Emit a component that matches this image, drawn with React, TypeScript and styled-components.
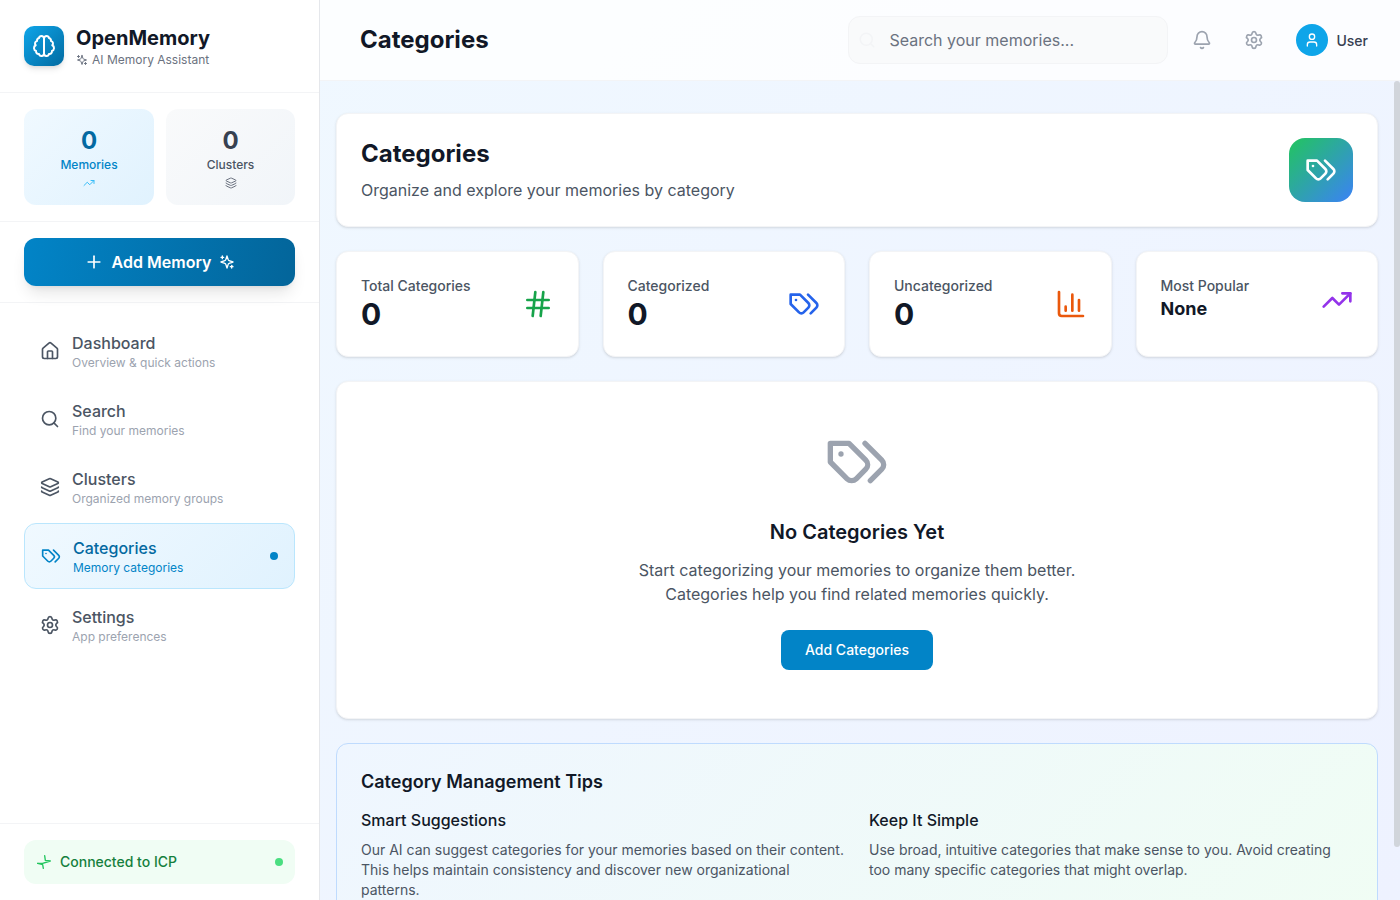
import React from "react";
import styled, { createGlobalStyle } from "styled-components";
import { Bell, ChartColumn, Hash, House, Layers, Plus, Search, Settings, TrendingUp, User } from "lucide-react";

const Global = createGlobalStyle`
  html, body { margin: 0; padding: 0; height: 100%; overflow: hidden; }
  #root { height: 100%; }
  * { box-sizing: border-box; }
  body { font-family: Inter, "Liberation Sans", sans-serif; color: #111827; }
`;

type GlyphProps = { size?: number; color?: string; strokeWidth?: number };

const Glyph = ({ size = 24, color = "currentColor", strokeWidth = 2, children }: GlyphProps & { children: React.ReactNode }) => (
  <svg width={size} height={size} viewBox="0 0 24 24" fill="none" stroke={color} strokeWidth={strokeWidth} strokeLinecap="round" strokeLinejoin="round">
    {children}
  </svg>
);

const Tags = (p: GlyphProps) => (
  <Glyph {...p}>
    <path d="M9 5H2v7l6.29 6.29c.94.94 2.48.94 3.42 0l3.58-3.58c.94-.94.94-2.48 0-3.42L9 5Z" />
    <path d="M6 9.01V9" />
    <path d="m15 5 6.3 6.3a2.4 2.4 0 0 1 0 3.4L17 19" />
  </Glyph>
);

const Brain = (p: GlyphProps) => (
  <Glyph {...p}>
    <path d="M9.5 2A2.5 2.5 0 0 1 12 4.5v15a2.5 2.5 0 0 1-4.96.44 2.5 2.5 0 0 1-2.96-3.08 3 3 0 0 1-.34-5.58 2.5 2.5 0 0 1 1.32-4.24 2.5 2.5 0 0 1 1.98-3A2.5 2.5 0 0 1 9.5 2Z" />
    <path d="M14.5 2A2.5 2.5 0 0 0 12 4.5v15a2.5 2.5 0 0 0 4.96.44 2.5 2.5 0 0 0 2.96-3.08 3 3 0 0 0 .34-5.58 2.5 2.5 0 0 0-1.32-4.24 2.5 2.5 0 0 0-1.98-3A2.5 2.5 0 0 0 14.5 2Z" />
  </Glyph>
);

const Sparkles = (p: GlyphProps) => (
  <Glyph {...p}>
    <path d="m12 3-1.912 5.813a2 2 0 0 1-1.275 1.275L3 12l5.813 1.912a2 2 0 0 1 1.275 1.275L12 21l1.912-5.813a2 2 0 0 1 1.275-1.275L21 12l-5.813-1.912a2 2 0 0 1-1.275-1.275L12 3Z" />
    <path d="M5 3v4" />
    <path d="M19 17v4" />
    <path d="M3 5h4" />
    <path d="M17 19h4" />
  </Glyph>
);

const Bolt = (p: GlyphProps) => (
  <Glyph {...p}>
    <path d="M13 2.5 14 9.5 21.5 10.5 10 14 2.5 14" />
    <path d="M2.5 14 10 16 11 21.5" />
  </Glyph>
);

const Shell = styled.div`
  display: flex;
  height: 100vh;
  background: linear-gradient(135deg, #f0f9ff 0%, #eef2ff 100%);
`;
const Sidebar = styled.aside`
  width: 320px;
  flex: none;
  display: flex;
  flex-direction: column;
  background: #fff;
  border-right: 1px solid #e5e7eb;
`;
const Brand = styled.div`
  height: 93px;
  padding: 0 24px;
  display: flex;
  align-items: center;
  gap: 12px;
  border-bottom: 1px solid #f3f4f6;
`;
const LogoMark = styled.div`
  width: 40px;
  height: 40px;
  border-radius: 10px;
  display: flex;
  align-items: center;
  justify-content: center;
  color: #fff;
  background: linear-gradient(135deg, #0ea5e9, #036ba1);
  box-shadow: 0 4px 6px -1px rgba(0,0,0,.1), 0 2px 4px -2px rgba(0,0,0,.1);
`;
const BrandName = styled.div`
  font-size: 20px;
  line-height: 28px;
  font-weight: 700;
  color: #111827;
`;
const BrandSub = styled.div`
  display: flex;
  align-items: center;
  gap: 4px;
  font-size: 12px;
  line-height: 16px;
  color: #6b7280;
`;
const Stats = styled.div`
  height: 129px;
  padding: 16px 24px;
  display: grid;
  grid-template-columns: 130px 129px;
  gap: 12px;
  border-bottom: 1px solid #f3f4f6;
`;
const StatBox = styled.div<{ $accent?: boolean }>`
  height: 96px;
  padding-top: 16px;
  border-radius: 12px;
  display: flex;
  flex-direction: column;
  align-items: center;
  background: ${p => p.$accent ? "linear-gradient(135deg, #f0f9ff, #e0f2fe)" : "linear-gradient(135deg, #f9fafb, #f1f5f9)"};
`;
const StatNum = styled.div<{ $accent?: boolean }>`
  font-size: 24px;
  line-height: 32px;
  font-weight: 700;
  color: ${p => p.$accent ? "#0369a1" : "#374151"};
`;
const StatLabel = styled.div<{ $accent?: boolean }>`
  font-size: 12px;
  line-height: 16px;
  font-weight: 500;
  color: ${p => p.$accent ? "#0284c7" : "#4b5563"};
  margin-bottom: 4px;
`;
const ActionWrap = styled.div`
  height: 81px;
  padding: 16px 24px;
  border-bottom: 1px solid #f3f4f6;
`;
const AddButton = styled.button`
  width: 100%;
  height: 48px;
  border: 0;
  border-radius: 12px;
  display: flex;
  align-items: center;
  justify-content: center;
  gap: 8px;
  color: #fff;
  font: 600 16px/24px Inter, sans-serif;
  background: linear-gradient(100deg, #0284c7, #03659a);
  box-shadow: 0 10px 15px -3px rgba(0,0,0,.1), 0 4px 6px -4px rgba(0,0,0,.1);
`;
const Nav = styled.nav`
  flex: 1;
  padding: 16px 24px;
  display: flex;
  flex-direction: column;
  gap: 4px;
`;
const NavItem = styled.div<{ $active?: boolean }>`
  height: ${p => p.$active ? "66px" : "64px"};
  padding: 0 16px;
  display: flex;
  align-items: center;
  gap: 12px;
  border-radius: 12px;
  color: ${p => p.$active ? "#0284c7" : "#4b5563"};
  ${p => p.$active ? `
    background: linear-gradient(135deg, #f0f9ff, #e0f2fe);
    border: 1px solid #bae6fd;
  ` : ""}
`;
const NavText = styled.div`
  flex: 1;
  min-width: 0;
`;
const NavTitle = styled.div<{ $active?: boolean }>`
  font-size: 16px;
  line-height: 24px;
  font-weight: 500;
  color: ${p => p.$active ? "#0369a1" : "#4b5563"};
`;
const NavSub = styled.div<{ $active?: boolean }>`
  font-size: 12px;
  line-height: 16px;
  color: ${p => p.$active ? "#0284c7" : "#9ca3af"};
`;
const ActiveDot = styled.span`
  width: 8px;
  height: 8px;
  border-radius: 50%;
  background: #0284c7;
`;
const SideFoot = styled.div`
  height: 77px;
  padding: 16px 24px;
  border-top: 1px solid #f3f4f6;
`;
const Connected = styled.div`
  height: 44px;
  padding: 0 12px;
  border-radius: 12px;
  background: #f0fdf4;
  display: flex;
  align-items: center;
  gap: 8px;
  color: #15803d;
  font-size: 14px;
  line-height: 20px;
  font-weight: 500;
`;
const ConnLabel = styled.span`
  flex: 1;
`;
const ConnDot = styled.span`
  width: 8px;
  height: 8px;
  border-radius: 50%;
  background: #4ade80;
`;
const Main = styled.div`
  flex: 1;
  min-width: 0;
  display: flex;
  flex-direction: column;
`;
const Header = styled.header`
  height: 81px;
  flex: none;
  padding: 0 32px 0 40px;
  display: flex;
  align-items: center;
  background: rgba(255,255,255,.8);
  border-bottom: 1px solid #f3f4f6;
`;
const PageTitle = styled.h1`
  margin: 0;
  flex: 1;
  font-size: 24px;
  line-height: 32px;
  font-weight: 700;
  color: #111827;
`;
const SearchBox = styled.div`
  width: 320px;
  height: 48px;
  padding: 0 16px 0 40px;
  border-radius: 12px;
  border: 1px solid #f3f4f6;
  background: #f9fafb;
  display: flex;
  align-items: center;
  font-size: 16px;
  color: #6b7280;
  position: relative;
`;
const SearchGhost = styled.span`
  position: absolute;
  left: 9px;
  top: 14px;
  color: #f3f4f6;
  display: flex;
`;
const HeadIcon = styled.div<{ $gap: number }>`
  width: 20px;
  display: flex;
  color: #9ca3af;
  margin-left: ${p => p.$gap}px;
`;
const UserWrap = styled.div`
  display: flex;
  align-items: center;
  gap: 8px;
  margin-left: 32px;
  font-size: 14px;
  font-weight: 500;
  color: #374151;
`;
const Avatar = styled.div`
  width: 32px;
  height: 32px;
  border-radius: 50%;
  background: #0ea5e9;
  color: #fff;
  display: flex;
  align-items: center;
  justify-content: center;
`;
const ScrollArea = styled.div`
  position: relative;
  flex: 1;
  min-height: 0;
  display: flex;
`;
const Scroll = styled.main`
  flex: 1;
  min-width: 0;
  overflow-y: scroll;
  padding: 32px 22px 32px 16px;
`;
const ScrollThumb = styled.div`
  position: absolute;
  top: 0;
  right: 0;
  width: 6px;
  height: 766px;
  border-radius: 3px;
  background: #d1d5db;
`;
const Card = styled.section`
  background: #fff;
  border: 1px solid #f3f4f6;
  border-radius: 12px;
  box-shadow: 0 1px 3px rgba(0,0,0,.1), 0 1px 2px -1px rgba(0,0,0,.1);
`;
const Hero = styled(Card)`
  height: 114px;
  padding: 0 24px;
  display: flex;
  align-items: center;
  justify-content: space-between;
`;
const HeroTitle = styled.h2`
  margin: 0 0 8px;
  font-size: 24px;
  line-height: 32px;
  font-weight: 700;
  color: #111827;
`;
const HeroSub = styled.p`
  margin: 0;
  font-size: 16px;
  line-height: 24px;
  color: #4b5563;
`;
const HeroIcon = styled.div`
  width: 64px;
  height: 64px;
  border-radius: 16px;
  display: flex;
  align-items: center;
  justify-content: center;
  color: #fff;
  background: linear-gradient(135deg, #22c55e, #3b82f6);
`;
const MetricGrid = styled.div`
  margin-top: 24px;
  display: grid;
  grid-template-columns: repeat(4, 1fr);
  gap: 24px;
`;
const Metric = styled(Card)`
  height: 106px;
  padding: 24px;
`;
const MetricRow = styled.div`
  display: flex;
  justify-content: space-between;
  align-items: center;
`;
const MetricLabel = styled.div`
  font-size: 14px;
  line-height: 20px;
  font-weight: 500;
  color: #4b5563;
`;
const MetricValue = styled.div<{ $small?: boolean }>`
  font-size: ${p => p.$small ? "18px" : "30px"};
  line-height: ${p => p.$small ? "26px" : "36px"};
  padding-bottom: ${p => p.$small ? "2px" : "0"};
  font-weight: 700;
  color: #111827;
`;
const Empty = styled(Card)`
  margin-top: 24px;
  height: 338px;
  padding-top: 48px;
  display: flex;
  flex-direction: column;
  align-items: center;
  text-align: center;
`;
const EmptyTitle = styled.h3`
  margin: 24px 0 12px;
  font-size: 20px;
  line-height: 28px;
  font-weight: 600;
  color: #111827;
`;
const EmptyText = styled.p`
  margin: 0 0 24px;
  width: 448px;
  font-size: 16px;
  line-height: 24px;
  color: #4b5563;
`;
const PrimaryBtn = styled.button`
  height: 40px;
  padding: 0 24px;
  border: 0;
  border-radius: 8px;
  background: #0284c7;
  color: #fff;
  font: 500 14px/20px Inter, sans-serif;
`;
const Tips = styled.section`
  margin-top: 24px;
  padding: 24px;
  border-radius: 12px;
  border: 1px solid #bfdbfe;
  background: linear-gradient(135deg, #eff6ff, #f0fdf4);
`;
const TipsTitle = styled.h3`
  margin: 0 0 12px;
  font-size: 18px;
  line-height: 28px;
  font-weight: 600;
  color: #111827;
`;
const TipsGrid = styled.div`
  display: grid;
  grid-template-columns: 1fr 1fr;
  gap: 24px;
`;
const TipHead = styled.h4`
  margin: 0 0 8px;
  font-size: 16px;
  line-height: 24px;
  font-weight: 500;
  color: #111827;
`;
const TipText = styled.p`
  margin: 0;
  font-size: 14px;
  line-height: 20px;
  color: #4b5563;
`;

const NAV = [
  { t: "Dashboard", s: "Overview & quick actions", I: House },
  { t: "Search", s: "Find your memories", I: Search },
  { t: "Clusters", s: "Organized memory groups", I: Layers },
  { t: "Categories", s: "Memory categories", I: Tags, active: true },
  { t: "Settings", s: "App preferences", I: Settings },
];

const METRICS = [
  { l: "Total Categories", v: "0", I: Hash, c: "#16a34a" },
  { l: "Categorized", v: "0", I: Tags, c: "#2563eb" },
  { l: "Uncategorized", v: "0", I: ChartColumn, c: "#ea580c" },
  { l: "Most Popular", v: "None", I: TrendingUp, c: "#9333ea", small: true },
];

export default function App() {
  return (
    <Shell>
      <Global />
      <Sidebar>
        <Brand>
          <LogoMark><Brain size={24} /></LogoMark>
          <div>
            <BrandName>OpenMemory</BrandName>
            <BrandSub><Sparkles size={12} />AI Memory Assistant</BrandSub>
          </div>
        </Brand>
        <Stats>
          <StatBox $accent>
            <StatNum $accent>0</StatNum>
            <StatLabel $accent>Memories</StatLabel>
            <TrendingUp size={12} color="#38bdf8" />
          </StatBox>
          <StatBox>
            <StatNum>0</StatNum>
            <StatLabel>Clusters</StatLabel>
            <Layers size={12} color="#6b7280" />
          </StatBox>
        </Stats>
        <ActionWrap>
          <AddButton><Plus size={20} /> Add Memory <Sparkles size={16} /></AddButton>
        </ActionWrap>
        <Nav>
          {NAV.map(({ t, s, I, active }) => (
            <NavItem key={t} $active={active}>
              <I size={20} />
              <NavText>
                <NavTitle $active={active}>{t}</NavTitle>
                <NavSub $active={active}>{s}</NavSub>
              </NavText>
              {active && <ActiveDot />}
            </NavItem>
          ))}
        </Nav>
        <SideFoot>
          <Connected>
            <Bolt size={16} color="#22c55e" />
            <ConnLabel>Connected to ICP</ConnLabel>
            <ConnDot />
          </Connected>
        </SideFoot>
      </Sidebar>
      <Main>
        <Header>
          <PageTitle>Categories</PageTitle>
          <SearchBox><SearchGhost><Search size={18} /></SearchGhost>Search your memories...</SearchBox>
          <HeadIcon $gap={24}><Bell size={20} /></HeadIcon>
          <HeadIcon $gap={32}><Settings size={20} /></HeadIcon>
          <UserWrap><Avatar><User size={16} /></Avatar>User</UserWrap>
        </Header>
        <ScrollArea>
          <Scroll>
            <Hero>
              <div>
                <HeroTitle>Categories</HeroTitle>
                <HeroSub>Organize and explore your memories by category</HeroSub>
              </div>
              <HeroIcon><Tags size={32} /></HeroIcon>
            </Hero>
            <MetricGrid>
              {METRICS.map(({ l, v, I, c, small }) => (
                <Metric key={l}>
                  <MetricRow>
                    <div>
                      <MetricLabel>{l}</MetricLabel>
                      <MetricValue $small={small}>{v}</MetricValue>
                    </div>
                    <I size={32} color={c} />
                  </MetricRow>
                </Metric>
              ))}
            </MetricGrid>
            <Empty>
              <Tags size={64} color="#9ca3af" />
              <EmptyTitle>No Categories Yet</EmptyTitle>
              <EmptyText>Start categorizing your memories to organize them better. Categories help you find related memories quickly.</EmptyText>
              <PrimaryBtn>Add Categories</PrimaryBtn>
            </Empty>
            <Tips>
              <TipsTitle>Category Management Tips</TipsTitle>
              <TipsGrid>
                <div>
                  <TipHead>Smart Suggestions</TipHead>
                  <TipText>Our AI can suggest categories for your memories based on their content. This helps maintain consistency and discover new organizational patterns.</TipText>
                </div>
                <div>
                  <TipHead>Keep It Simple</TipHead>
                  <TipText>Use broad, intuitive categories that make sense to you. Avoid creating too many specific categories that might overlap.</TipText>
                </div>
              </TipsGrid>
            </Tips>
          </Scroll>
          <ScrollThumb />
        </ScrollArea>
      </Main>
    </Shell>
  );
}
